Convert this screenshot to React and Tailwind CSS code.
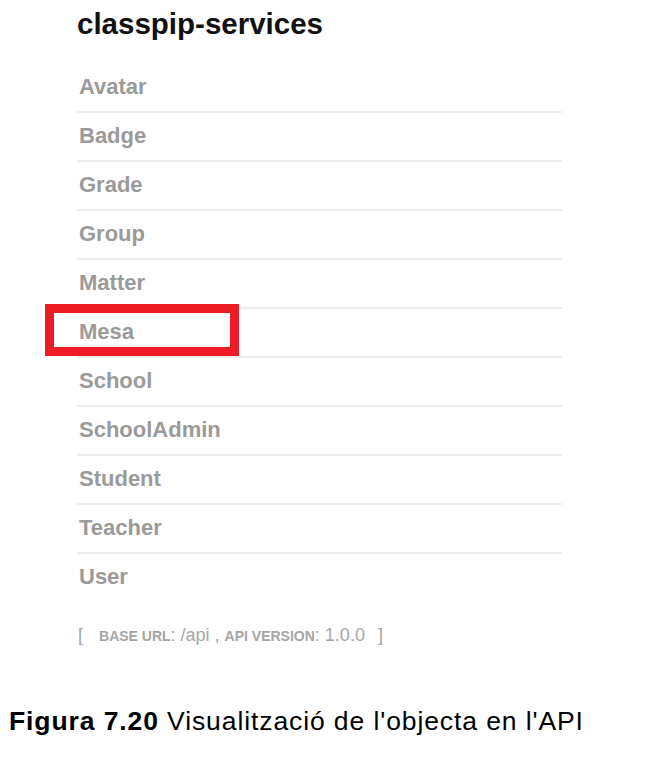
import React from "react";

const items = [
  "Avatar",
  "Badge",
  "Grade",
  "Group",
  "Matter",
  "Mesa",
  "School",
  "SchoolAdmin",
  "Student",
  "Teacher",
  "User",
];

export default function App() {
  return (
    <div
      className="relative w-[648px] h-[758px] bg-white overflow-hidden"
      style={{ fontFamily: '"Liberation Sans", Arial, sans-serif' }}
    >
      <div className="pl-[77px] w-[562px]">
        <h1 className="pt-[6px] text-[29.5px] leading-[36px] font-bold text-[#111]">
          classpip-services
        </h1>
        <ul className="mt-[22px]">
          {items.map((name, i) => (
            <li
              key={name}
              className={
                i < items.length - 1
                  ? "pt-[11px] pb-[12px] border-b-2 border-[#ececec]"
                  : "pt-[11px] pb-[12px]"
              }
            >
              <span className="block pl-[2px] text-[22px] leading-[24px] font-bold text-[#9a9a9a]">
                {name}
              </span>
            </li>
          ))}
        </ul>
        <div className="mt-[22px] pl-[1px] text-[18px] leading-[24px] text-[#a6a6a6] whitespace-pre">
          <span>[</span>
          <span className="ml-[16px] text-[14px] font-bold uppercase">base url</span>
          <span>{": /api , "}</span>
          <span className="text-[14px] font-bold uppercase">api version</span>
          <span>{": 1.0.0"}</span>
          <span className="ml-[13px]">]</span>
        </div>
      </div>

      <p className="mt-[57px] pl-[9px] text-[26.5px] leading-[32px] tracking-[0.9px] text-black whitespace-nowrap">
        <span className="font-bold">Figura 7.20</span> Visualització de l'objecta en l'API
      </p>

      <div className="absolute left-[45px] top-[304px] w-[194px] h-[52px] border-[9px] border-[#ed1c24]" />
    </div>
  );
}
